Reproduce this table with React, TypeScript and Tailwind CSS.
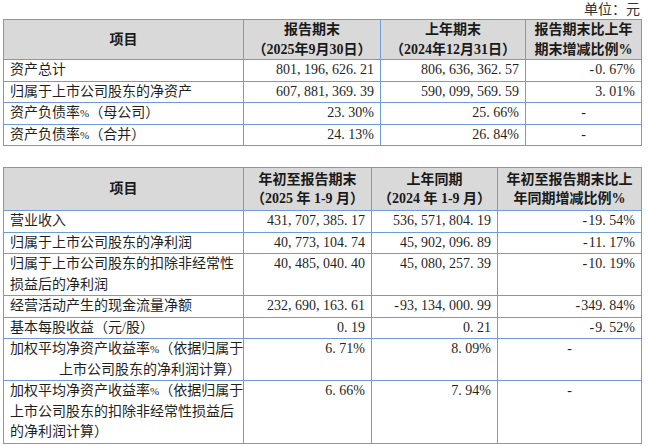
import type { ReactNode } from "react"

const FONT = { fontFamily: '"Liberation Serif", "Noto Sans CJK SC", serif' }

// SimSun-like half-width punctuation: give commas, dots and minus a full digit cell
function Num({ v }: { v: string }) {
  return (
    <>
      {v.split("").map((c, i) =>
        c === "," || c === "." ? (
          <span key={i} className="inline-block w-[7px] text-left">
            {c}
          </span>
        ) : c === "-" ? (
          <span key={i} className="inline-block w-[7px] text-center">
            {c}
          </span>
        ) : (
          <span key={i}>{c}</span>
        ),
      )}
    </>
  )
}

// narrow percent sign inside Chinese labels
function T({ s }: { s: string }) {
  const parts = s.split("%")
  return (
    <>
      {parts.map((p, i) => (
        <span key={i}>
          {p}
          {i < parts.length - 1 && <span className="text-[11px]">%</span>}
        </span>
      ))}
    </>
  )
}

function Th({ children }: { children: ReactNode }) {
  return (
    <th className="border border-[#6d9ed3] bg-[#d9d9d9] px-1 text-center align-middle font-bold leading-[19.5px] text-[#1a1a1a]">
      {children}
    </th>
  )
}

function Label({ children }: { children: ReactNode }) {
  return (
    <td className="overflow-hidden border border-[#6d9ed3] pl-[6px] pr-[2px] align-top whitespace-nowrap leading-[20.5px]">
      {children}
    </td>
  )
}

function Val({ v }: { v: string }) {
  return (
    <td className="border border-[#6d9ed3] pr-[6px] text-right align-top leading-[20.5px]">
      <Num v={v} />
    </td>
  )
}

function Dash() {
  return (
    <td className="border border-[#6d9ed3] text-center align-top leading-[20.5px]">-</td>
  )
}

const balance: [string, string, string, string | null][] = [
  ["资产总计", "801,196,626.21", "806,636,362.57", "-0.67%"],
  ["归属于上市公司股东的净资产", "607,881,369.39", "590,099,569.59", "3.01%"],
  ["资产负债率%（母公司）", "23.30%", "25.66%", null],
  ["资产负债率%（合并）", "24.13%", "26.84%", null],
]

const income: [ReactNode, string, string, string | null][] = [
  ["营业收入", "431,707,385.17", "536,571,804.19", "-19.54%"],
  ["归属于上市公司股东的净利润", "40,773,104.74", "45,902,096.89", "-11.17%"],
  [
    <>
      <div>归属于上市公司股东的扣除非经常性</div>
      <div>损益后的净利润</div>
    </>,
    "40,485,040.40",
    "45,080,257.39",
    "-10.19%",
  ],
  ["经营活动产生的现金流量净额", "232,690,163.61", "-93,134,000.99", "-349.84%"],
  ["基本每股收益（元/股）", "0.19", "0.21", "-9.52%"],
  [
    <>
      <div>
        <T s="加权平均净资产收益率%（依据归属于" />
      </div>
      <div className="text-right">上市公司股东的净利润计算）</div>
    </>,
    "6.71%",
    "8.09%",
    null,
  ],
  [
    <>
      <div>
        <T s="加权平均净资产收益率%（依据归属于" />
      </div>
      <div>上市公司股东的扣除非经常性损益后</div>
      <div>的净利润计算）</div>
    </>,
    "6.66%",
    "7.94%",
    null,
  ],
]

export default function App() {
  return (
    <div
      className="h-[446px] w-[649px] overflow-hidden bg-white pl-[3px] text-[14px] text-[#1f1f1f]"
      style={FONT}
    >
      <div className="h-[19px] pr-[9px] pt-[1px] text-right leading-[17px] text-[#333]">
        单位：元
      </div>

      <table className="w-[638px] table-fixed border-collapse">
        <colgroup>
          <col className="w-[240px]" />
          <col className="w-[137px]" />
          <col className="w-[145px]" />
          <col className="w-[116px]" />
        </colgroup>
        <thead>
          <tr className="h-[40px]">
            <Th>项目</Th>
            <Th>
              <div>报告期末</div>
              <div>（2025年9月30日）</div>
            </Th>
            <Th>
              <div>上年期末</div>
              <div>（2024年12月31日）</div>
            </Th>
            <Th>
              <div>报告期末比上年</div>
              <div>期末增减比例%</div>
            </Th>
          </tr>
        </thead>
        <tbody>
          {balance.map(([label, a, b, c]) => (
            <tr key={label} className="h-[21.5px]">
              <Label>
                <T s={label} />
              </Label>
              <Val v={a} />
              <Val v={b} />
              {c ? <Val v={c} /> : <Dash />}
            </tr>
          ))}
        </tbody>
      </table>

      <table className="mt-[21px] w-[638px] table-fixed border-collapse">
        <colgroup>
          <col className="w-[240px]" />
          <col className="w-[128px]" />
          <col className="w-[126px]" />
          <col className="w-[144px]" />
        </colgroup>
        <thead>
          <tr className="h-[43px]">
            <Th>项目</Th>
            <Th>
              <div>年初至报告期末</div>
              <div>（2025 年 1-9 月）</div>
            </Th>
            <Th>
              <div>上年同期</div>
              <div>（2024 年 1-9 月）</div>
            </Th>
            <Th>
              <div>年初至报告期末比上</div>
              <div>年同期增减比例%</div>
            </Th>
          </tr>
        </thead>
        <tbody>
          {income.map(([label, a, b, c], i) => (
            <tr key={i} className="h-[21.5px]">
              <Label>{label}</Label>
              <Val v={a} />
              <Val v={b} />
              {c ? <Val v={c} /> : <Dash />}
            </tr>
          ))}
        </tbody>
      </table>
    </div>
  )
}
